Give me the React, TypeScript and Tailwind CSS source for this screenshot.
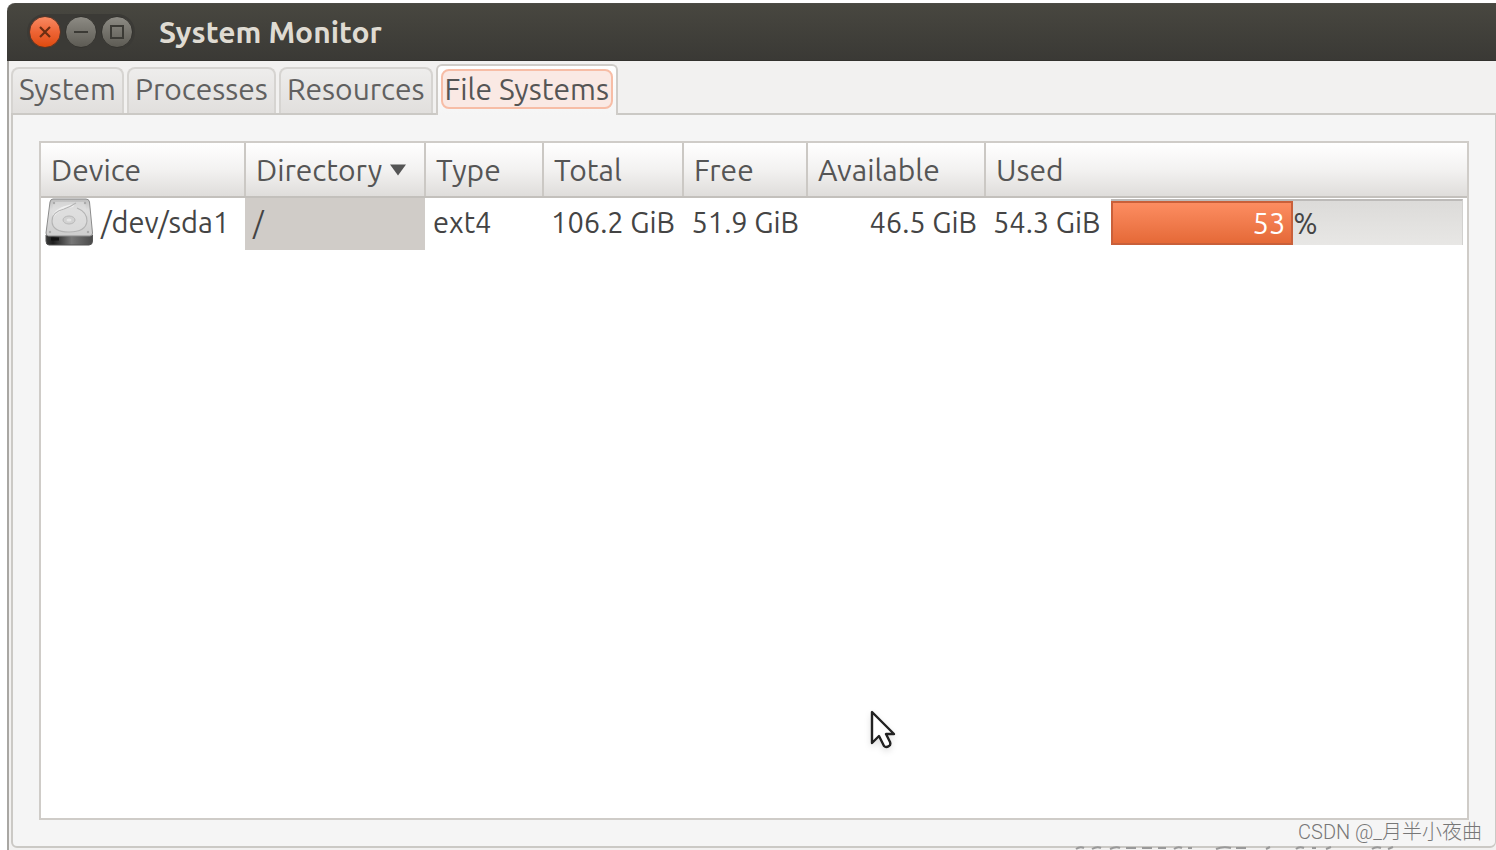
import { useState } from "react";

const tabs = ["System", "Processes", "Resources", "File Systems"];

const columns = [
  { name: "Device", width: "w-[204px]" },
  { name: "Directory", width: "w-[180px]" },
  { name: "Type", width: "w-[118px]" },
  { name: "Total", width: "w-[140px]" },
  { name: "Free", width: "w-[124px]" },
  { name: "Available", width: "w-[178px]" },
  { name: "Used", width: "w-auto" },
];

const disks = [
  {
    device: "/dev/sda1",
    directory: "/",
    type: "ext4",
    total: "106.2 GiB",
    free: "51.9 GiB",
    available: "46.5 GiB",
    used: "54.3 GiB",
    percent: 53,
  },
];

function TitleBar() {
  return (
    <header className="flex h-[58px] shrink-0 items-center rounded-tl-lg border-t border-b border-t-[#4d4c46] border-b-[#33322e] bg-linear-to-b from-[#484740] to-[#3a3935] pl-5">
      <div className="flex items-center gap-1 rounded-full bg-[#3b3a36] p-0.5">
        <button
          aria-label="Close"
          className="flex size-8 items-center justify-center rounded-full border border-[#5a3526] bg-linear-to-b from-[#f88a62] via-[#ee6434] to-[#de4a09]"
        >
          <svg viewBox="0 0 16 16" className="size-4" stroke="#6b2d12" strokeWidth="2.2">
            <path d="M3 3 13 13M13 3 3 13" />
          </svg>
        </button>
        <button
          aria-label="Minimize"
          className="flex size-8 items-center justify-center rounded-full border border-[#34332f] bg-linear-to-b from-[#8d8b84] to-[#5d5b54]"
        >
          <svg viewBox="0 0 16 16" className="size-4" stroke="#3b3a35" strokeWidth="2">
            <path d="M1 8H15" />
          </svg>
        </button>
        <button
          aria-label="Maximize"
          className="flex size-8 items-center justify-center rounded-full border border-[#34332f] bg-linear-to-b from-[#8d8b84] to-[#5d5b54]"
        >
          <svg viewBox="0 0 16 16" className="size-4" fill="none" stroke="#3b3a35" strokeWidth="2">
            <path d="M2 2H14V14H2Z" />
          </svg>
        </button>
      </div>
      <h1 className="pl-6 text-[30px] leading-8 font-bold text-[#dfdbd2]">
        System Monitor
      </h1>
    </header>
  );
}

function DiskIcon() {
  return (
    <svg viewBox="0 0 48 48" className="size-12 shrink-0" aria-hidden="true">
      <defs>
        <linearGradient id="diskTop" x1="0" y1="0" x2="0" y2="1">
          <stop offset="0" stopColor="#bdbdbd" />
          <stop offset="0.3" stopColor="#dedede" />
          <stop offset="1" stopColor="#cdcdcd" />
        </linearGradient>
        <linearGradient id="diskFront" x1="0" y1="0" x2="1" y2="0">
          <stop offset="0" stopColor="#3a3a3a" />
          <stop offset="0.15" stopColor="#1e1e1e" />
          <stop offset="0.55" stopColor="#777" />
          <stop offset="1" stopColor="#4a4a4a" />
        </linearGradient>
      </defs>
      <path d="M1 37H47.500V43Q47.500 47 44 47H4Q1 47 1 43Z" fill="url(#diskFront)" stroke="#555" />
      <path d="M8 1H41Q44 1 44.500 4L47.500 35Q47.500 38 45 38H3.500Q1 38 1 35L5 4Q5.500 1 8 1Z" fill="url(#diskTop)" stroke="#8b8b8b" />
      <path d="M8 4H40L42 18Q45 32 30 34H18Q4 32 7 19Z" fill="#e0e0e0" opacity="0.6" />
      <path d="M8 17Q12 8 30 6L28 9Q14 11 8 20Z" fill="#f0f0f0" />
      <path d="M32 10Q42 14 42 23Q41 34 24 34Q7 34 7 23Q7 14 19 11Q25 9 31 5" fill="none" stroke="#b4b4b4" strokeWidth="1.200" />
      <ellipse cx="24" cy="22" rx="6" ry="4" fill="#d2d2d2" stroke="#b8b8b8" />
      <ellipse cx="24" cy="22" rx="2.500" ry="1.500" fill="#e6e6e6" />
      <g fill="#aaa">
        <circle cx="9" cy="5" r="1.200" />
        <circle cx="40" cy="5" r="1.200" />
        <circle cx="5" cy="34" r="1.200" />
        <circle cx="43" cy="34" r="1.200" />
      </g>
      <path d="M6 41H14" stroke="#111" strokeWidth="3" />
    </svg>
  );
}

function UsageBar({ percent }: { percent: number }) {
  return (
    <div className="flex h-[46px] min-w-0 flex-1 items-stretch border-t-2 border-r border-t-[#bcbab8] border-r-[#d2d1cf] bg-linear-to-b from-[#dcdbd9] to-[#e8e7e5]">
      <div
        className="flex items-center justify-end border-2 border-[#c9603a] bg-linear-to-b from-[#fc8d61] to-[#e56937] pr-1.5 text-white"
        style={{ width: `${percent - 1}%` }}
      >
        {percent}
      </div>
      <span className="self-center">%</span>
    </div>
  );
}

function FileSystemTable() {
  return (
    <table className="w-full table-fixed border-collapse text-left">
      <thead>
        <tr>
          {columns.map((col) => (
            <th
              key={col.name}
              className={`${col.width} h-[54px] border-r-2 border-b-2 border-r-[#cbc8c4] border-b-[#c3c0bc] bg-linear-to-b from-white via-[#f3f2f1] to-[#dfdddb] p-0 font-normal last:border-r-0`}
            >
              <button className="flex h-[52px] w-full items-center gap-2 pl-2.5 text-[30px] text-[#555]">
                {col.name}
                {col.name === "Directory" && (
                  <svg viewBox="0 0 16 12" className="h-3 w-4" fill="#555">
                    <path d="M0 0.500H16L8 11.500Z" />
                  </svg>
                )}
              </button>
            </th>
          ))}
        </tr>
      </thead>
      <tbody>
        {disks.map((disk) => (
          <tr key={disk.device} className="h-[52px] whitespace-nowrap">
            <td className="p-0 pb-1 pl-1">
              <div className="flex items-center gap-2">
                <DiskIcon />
                {disk.device}
              </div>
            </td>
            <td className="bg-[#d0ccc8] p-0 pb-1 pl-2">{disk.directory}</td>
            <td className="p-0 pb-1 pl-2">{disk.type}</td>
            <td className="p-0 pr-2 pb-1 text-right">{disk.total}</td>
            <td className="p-0 pr-2 pb-1 text-right">{disk.free}</td>
            <td className="p-0 pr-2 pb-1 text-right">{disk.available}</td>
            <td className="p-0 pr-1 pb-1 pl-2">
              <div className="flex items-center gap-2.5">
                {disk.used}
                <UsageBar percent={disk.percent} />
              </div>
            </td>
          </tr>
        ))}
      </tbody>
    </table>
  );
}

function Pointer() {
  return (
    <svg
      viewBox="0 0 28 42"
      className="absolute top-[708px] left-[869px] h-[42px] w-7 drop-shadow-md"
      aria-hidden="true"
    >
      <path
        d="M3 4V35L10 28L15 38Q17 40 20 38Q22 37 21 34L17 26H25Z"
        fill="#fff"
        stroke="#222"
        strokeWidth="2.400"
        strokeLinejoin="round"
      />
    </svg>
  );
}

export default function App() {
  const [active, setActive] = useState("File Systems");

  return (
    <div className="relative flex h-screen flex-col overflow-hidden bg-white pt-[3px] pl-[7px] font-['Ubuntu','Noto_Sans',sans-serif] text-[29px] leading-9 text-[#444]">
      <TitleBar />
      <main className="flex min-h-0 flex-1 flex-col border-l-2 border-[#a9a7a3] bg-[#f2f1f0] pb-0.5 pl-0.5">
        <div role="tablist" className="flex h-[52px] shrink-0 items-end gap-[3px]">
          {tabs.map((tab) => (
            <button
              key={tab}
              role="tab"
              aria-selected={tab === active}
              onClick={() => setActive(tab)}
              className={
                tab === active
                  ? "relative -mb-0.5 h-[51px] rounded-t-md border-2 border-b-0 border-[#cfccc8] bg-linear-to-b from-white to-[#f5f5f5] px-[3px] pb-1 text-[30px] text-[#555]"
                  : "h-[46px] rounded-t-lg border-2 border-b-0 border-[#d6d4d1] bg-linear-to-b from-[#eeedec] to-[#e1dfdd] px-1.5 pb-1 text-[30px] text-[#606060]"
              }
            >
              {tab === active ? (
                <span className="block rounded-lg border-2 border-[#f7bda6] bg-[#fae9e4] px-0.5">
                  {tab}
                </span>
              ) : (
                tab
              )}
            </button>
          ))}
        </div>
        <section className="flex min-h-0 flex-1 flex-col rounded-b-md border-2 border-r border-[#cbc9c5] bg-[#f5f5f5] p-[26px]">
          <div className="min-h-0 flex-1 border-2 border-[#cfccc8] bg-white">
            <FileSystemTable />
          </div>
        </section>
      </main>
      <Pointer />
      <p className="absolute right-3.5 bottom-1 font-['Roboto','Noto_Sans_CJK_SC',sans-serif] text-xl leading-7 font-light text-[#777]">
        CSDN @_月半小夜曲
      </p>
      <svg
        viewBox="0 0 330 4"
        className="absolute right-[92px] bottom-0 h-1 w-[330px]"
        fill="none"
        stroke="#999"
        strokeWidth="2"
        aria-hidden="true"
      >
        <path d="M2 3Q6 0 10 2M18 3Q23 0 27 2M36 3Q42 0 46 2M52 2H62M68 2H78M84 2H92M100 3Q104 0 108 2M114 2H118M142 3Q149 0 157 2M162 2H172M192 3 196 1M222 3Q225 0 230 2M238 2H242M252 3 257 1M298 3Q302 0 307 2M314 3 319 1" />
      </svg>
    </div>
  );
}
